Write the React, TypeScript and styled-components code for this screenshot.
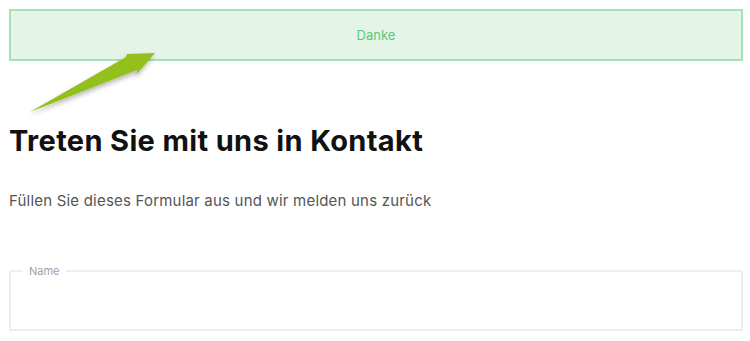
import React from 'react';
import styled, { createGlobalStyle } from 'styled-components';

const GlobalStyle = createGlobalStyle`
  html, body {
    margin: 0;
    padding: 0;
    background: #ffffff;
  }
  body {
    font-family: Inter, "Noto Sans", sans-serif;
  }
`;

const Page = styled.div`
  position: relative;
  padding: 9px 7px 0 9px;
  width: 750px;
  box-sizing: border-box;
`;

const Alert = styled.div`
  height: 52px;
  box-sizing: border-box;
  border: 2px solid #a6e0b7;
  background: #e4f5e7;
  color: #5bc778;
  font-size: 13px;
  display: flex;
  align-items: center;
  justify-content: center;
`;

const Heading = styled.h1`
  margin: 63px 0 0;
  font-size: 29px;
  line-height: 34px;
  font-weight: 700;
  color: #111;
  letter-spacing: 0.35px;
`;

const Lead = styled.p`
  margin: 33px 0 0;
  font-size: 15px;
  line-height: 20px;
  color: #555;
  letter-spacing: 0.2px;
`;

const Field = styled.fieldset`
  margin: 53px 0 0;
  height: 67px;
  box-sizing: border-box;
  border: 2px solid #eeeeee;
  padding: 0 0 0 12px;
  width: 734px;
`;

const Legend = styled.legend`
  font-size: 11px;
  color: #a0a0a0;
  padding: 0 6px;
  line-height: 14px;
`;

const Pointer = styled.svg`
  position: absolute;
  left: 0;
  top: 0;
  overflow: visible;
  pointer-events: none;
`;

export default function App() {
  return (
    <Page>
      <GlobalStyle />
      <Alert>Danke</Alert>
      <Heading>Treten Sie mit uns in Kontakt</Heading>
      <Lead>Füllen Sie dieses Formular aus und wir melden uns zurück</Lead>
      <Field>
        <Legend>Name</Legend>
      </Field>
      <Pointer width="200" height="130" viewBox="0 0 200 130">
        <defs>
          <filter id="arrowShadow" x="-20%" y="-40%" width="140%" height="180%">
            <feDropShadow dx="-1" dy="3" stdDeviation="2.5" floodColor="#000" floodOpacity="0.3" />
          </filter>
        </defs>
        <polygon
          points="30,112 126,57 127,54 155,53 137,74 137,70"
          fill="#93c01e"
          filter="url(#arrowShadow)"
        />
      </Pointer>
    </Page>
  );
}
